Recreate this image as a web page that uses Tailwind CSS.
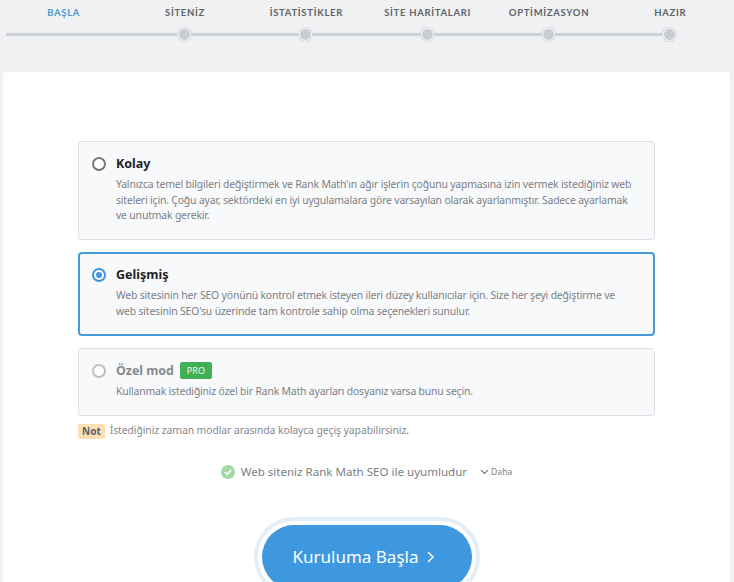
<!DOCTYPE html>
<html lang="en">
<head>
<meta charset="utf-8">
<title>Kurulum</title>
<meta name="viewport" content="width=device-width, initial-scale=1">
<script src="https://cdn.jsdelivr.net/npm/@tailwindcss/browser@4"></script>
</head>
<body class="bg-[#f0f1f3] h-[582px] overflow-hidden font-['Noto_Sans',sans-serif]">
  <!-- steps -->
  <div class="h-[72px] px-[3px]">
    <div class="grid grid-cols-6 pt-[6px] h-[28px] text-[9.5px] leading-[13px] font-bold tracking-[0.7px] text-center text-[#5f6368] font-['Lato',sans-serif]">
      <div class="text-[#4c97d6]">BAŞLA</div>
      <div>SİTENİZ</div>
      <div>İSTATİSTİKLER</div>
      <div>SİTE HARİTALARI</div>
      <div>OPTİMİZASYON</div>
      <div>HAZIR</div>
    </div>
    <div class="flex items-center ml-[3px] w-[670px]">
      <div class="w-[172px] h-[3px] bg-[#ced2d6]"></div>
      <div class="w-[13px] h-[13px] rounded-full bg-[#c9cdd2] border-[1.5px] border-white shadow-[0_0_0_1px_#d5d8dc]"></div>
      <div class="flex-1 h-[3px] bg-[#ced2d6]"></div>
      <div class="w-[13px] h-[13px] rounded-full bg-[#c9cdd2] border-[1.5px] border-white shadow-[0_0_0_1px_#d5d8dc]"></div>
      <div class="flex-1 h-[3px] bg-[#ced2d6]"></div>
      <div class="w-[13px] h-[13px] rounded-full bg-[#c9cdd2] border-[1.5px] border-white shadow-[0_0_0_1px_#d5d8dc]"></div>
      <div class="flex-1 h-[3px] bg-[#ced2d6]"></div>
      <div class="w-[13px] h-[13px] rounded-full bg-[#c9cdd2] border-[1.5px] border-white shadow-[0_0_0_1px_#d5d8dc]"></div>
      <div class="flex-1 h-[3px] bg-[#ced2d6]"></div>
      <div class="w-[13px] h-[13px] rounded-full bg-[#c9cdd2] border-[1.5px] border-white shadow-[0_0_0_1px_#d5d8dc]"></div>
    </div>
  </div>

  <!-- card -->
  <div class="mx-[3px] w-[727px] h-[510px] bg-white rounded-t-[4px] pt-[69px] px-[75px]">
    <div class="flex flex-col gap-[12px] w-[577px]">
      <div class="h-[99px] flex gap-[10px] border border-[#dcdfe3] rounded-[4px] bg-[#f8f9fb] pl-[13px] pt-[12px]">
        <div class="mt-[3px] w-[14px] h-[14px] shrink-0 rounded-full border-2 border-[#75797d] bg-white"></div>
        <div class="w-[520px]">
          <div class="text-[12.5px] leading-[19px] font-bold text-[#1f2329]">Kolay</div>
          <p class="mt-[4px] text-[10.4px] tracking-[-0.16px] leading-[15.5px] text-[#7b8085]">Yalnızca temel bilgileri değiştirmek ve Rank Math'ın ağır işlerin çoğunu yapmasına izin vermek istediğiniz web siteleri için. Çoğu ayar, sektördeki en iyi uygulamalara göre varsayılan olarak ayarlanmıştır. Sadece ayarlamak ve unutmak gerekir.</p>
        </div>
      </div>
      <div class="h-[84px] flex gap-[10px] border-2 border-[#4a9ad8] rounded-[4px] bg-[#f8f9fb] pl-[12px] pt-[11px]">
        <div class="mt-[3px] w-[14px] h-[14px] shrink-0 rounded-full border-2 border-[#3f95df] bg-white flex items-center justify-center">
          <div class="w-[6px] h-[6px] rounded-full bg-[#3f95df]"></div>
        </div>
        <div class="w-[520px]">
          <div class="text-[12.5px] leading-[19px] font-bold text-[#1f2329]">Gelişmiş</div>
          <p class="mt-[4px] text-[10.4px] tracking-[-0.16px] leading-[15.5px] text-[#7b8085]">Web sitesinin her SEO yönünü kontrol etmek isteyen ileri düzey kullanıcılar için. Size her şeyi değiştirme ve web sitesinin SEO'su üzerinde tam kontrole sahip olma seçenekleri sunulur.</p>
        </div>
      </div>
      <div class="h-[68px] flex gap-[10px] border border-[#dcdfe3] rounded-[4px] bg-[#f8f9fb] pl-[13px] pt-[13px]">
        <div class="mt-[2px] w-[14px] h-[14px] shrink-0 rounded-full border-2 border-[#bcc0c4] bg-white"></div>
        <div class="w-[520px]">
          <div class="flex items-center gap-[6px]">
            <span class="text-[12.4px] leading-[17px] font-bold text-[#85898e]">Özel mod</span>
            <span class="w-[32px] h-[17px] rounded-[2px] bg-[#3fb054] text-white/90 text-[9px] leading-[17px] text-center">PRO</span>
          </div>
          <p class="mt-[5px] text-[10.4px] tracking-[-0.17px] leading-[15.5px] text-[#7b8085]">Kullanmak istediğiniz özel bir Rank Math ayarları dosyanız varsa bunu seçin.</p>
        </div>
      </div>
    </div>

    <div class="mt-[7px] flex items-center gap-[5px] h-[16px]">
      <span class="px-[4px] h-[15px] rounded-[2px] bg-[#fddfb3] text-[10px] leading-[15px] font-bold text-[#5b5f63]">Not</span>
      <span class="text-[10.4px] tracking-[-0.08px] text-[#85898e]">İstediğiniz zaman modlar arasında kolayca geçiş yapabilirsiniz.</span>
    </div>

    <div class="mt-[25px] flex items-center justify-center h-[16px] w-[577px]">
      <svg class="w-[14px] h-[14px] mr-[6px]" viewBox="0 0 14 14"><circle cx="7" cy="7" r="7" fill="#a3d9a5"/><path d="M4 7.2l2.1 2.1L10 5.1" fill="none" stroke="#fff" stroke-width="1.6"/></svg>
      <span class="text-[11.55px] text-[#7b8085]">Web siteniz Rank Math SEO ile uyumludur</span>
      <svg class="w-[9px] h-[6px] ml-[13px] mr-[2px]" viewBox="0 0 9 6"><path d="M1 1.2l3.5 3.3L8 1.2" fill="none" stroke="#6f7378" stroke-width="1.1"/></svg>
      <span class="text-[8.6px] text-[#7b8085]">Daha</span>
    </div>

    <div class="mt-[37px] flex justify-center">
      <div class="w-[226px] h-[80px] shrink-0 rounded-full border-[4px] border-[#e6eef5] bg-white p-[4px]">
        <div class="h-[64px] rounded-full bg-[#3d98e0] flex items-center justify-center gap-[9px] pr-[6px] text-white text-[17px]">
          <span>Kuruluma Başla</span>
          <svg class="w-[7px] h-[12px]" viewBox="0 0 7 12"><path d="M1 1l5 5-5 5" fill="none" stroke="#fff" stroke-width="1.4"/></svg>
        </div>
      </div>
    </div>
  </div>
</body>
</html>
